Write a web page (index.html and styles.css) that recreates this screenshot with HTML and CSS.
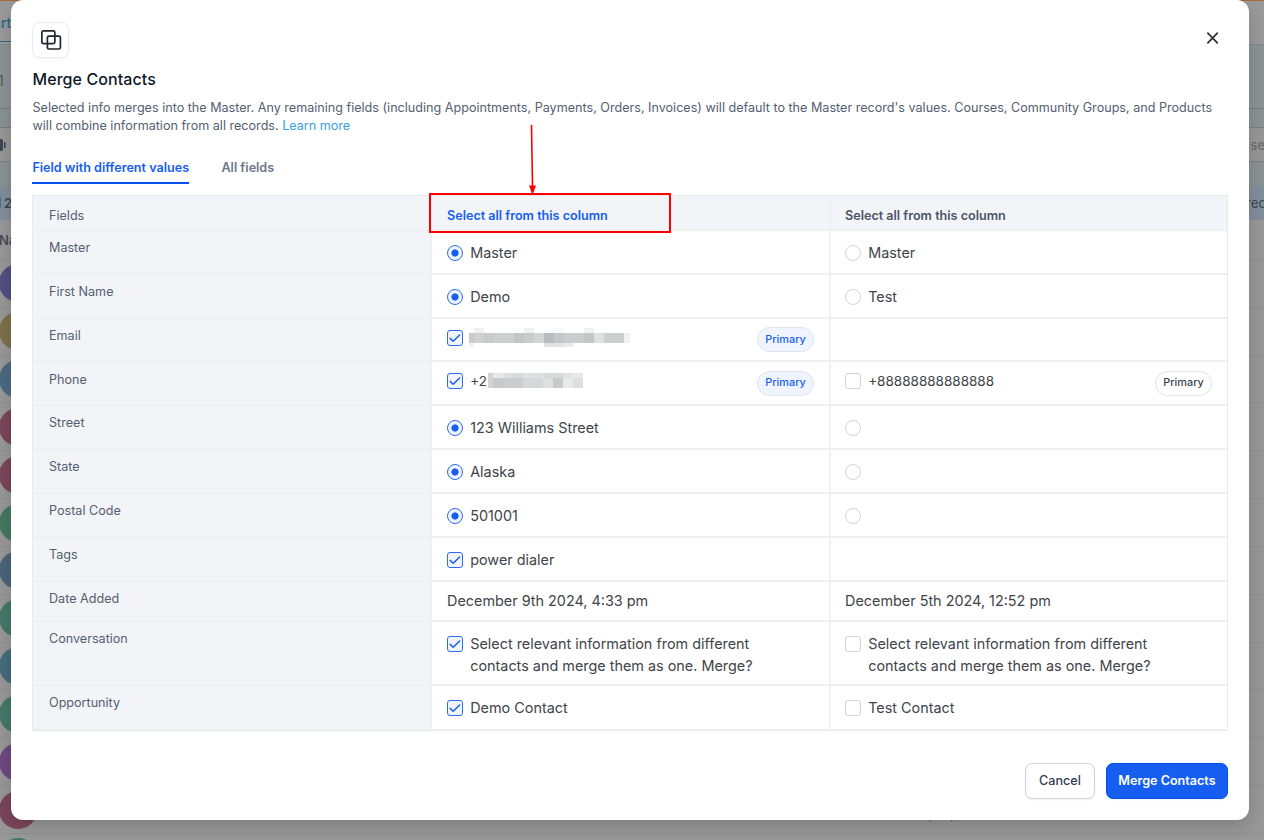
FILE: index.html
```
<!DOCTYPE html>
<html lang="en">
<head>
  <meta charset="UTF-8" />
  <title>Merge Contacts</title>
  <link rel="stylesheet" href="styles.css">
</head>
<body>
  <!-- PAGE BEHIND THE MODAL -->
  <div class="page">
    <div class="page-nav"><span class="nav-tab">art</span></div>
    <div class="page-band"><span class="count">1</span></div>
    <div class="page-gap"></div>
    <div class="page-search">
      <svg width="8" height="14" viewBox="0 0 8 14"><rect x="-8" y="1" width="11" height="12" rx="2" fill="#3b4551"/><rect x="4" y="4" width="1.6" height="6" fill="#3b4551"/></svg>
      <span>se</span>
    </div>
    <div class="page-gap low"></div>
    <div class="page-total"><span><i></i>2</span><span class="rec">rec</span></div>
    <div class="page-head">Na</div>
    <div class="page-row"><b class="avatar indigo"></b></div>
    <div class="page-row"><b class="avatar ochre"></b></div>
    <div class="page-row"><b class="avatar blue"></b></div>
    <div class="page-row"><b class="avatar maroon"></b></div>
    <div class="page-row"><b class="avatar maroon"></b></div>
    <div class="page-row"><b class="avatar green"></b></div>
    <div class="page-row"><b class="avatar slate"></b></div>
    <div class="page-row"><b class="avatar teal"></b></div>
    <div class="page-row"><b class="avatar cyan"></b></div>
    <div class="page-row"><b class="avatar teal"></b></div>
    <div class="page-row"><b class="avatar purple"></b></div>
    <div class="page-row"><b class="avatar maroon"></b><span class="row-link">(     )</span></div>
    <div class="page-row"><b class="avatar teal"></b></div>
  </div>

  <!-- MODAL -->
  <div class="modal">
    <div class="modal-top">
      <div class="modal-icon">
        <svg width="22" height="22" viewBox="0 0 22 22" fill="none" stroke="#20262e" stroke-width="1.7"><rect x="1.85" y="1.85" width="13" height="12.8" rx="1.6"/><rect x="7.4" y="7.2" width="13" height="12.8" rx="1.6"/></svg>
      </div>
      <button class="close" type="button" aria-label="Close">
        <svg width="13" height="12" viewBox="0 0 13 12" fill="none" stroke="#2b2f36" stroke-width="1.7" stroke-linecap="round"><path d="M1.9 1.2 11.3 10.8M11.3 1.2 1.9 10.8"/></svg>
      </button>
    </div>
    <h2>Merge Contacts</h2>
    <p class="intro">Selected info merges into the Master. Any remaining fields (including Appointments, Payments, Orders, Invoices) will default to the Master record's values. Courses, Community Groups, and Products<br>will combine information from all records. <a>Learn more</a></p>

    <div class="tabs">
      <span class="tab active">Field with different values</span>
      <span class="tab">All fields</span>
    </div>

    <div class="grid">
      <div class="label head">Fields</div>
      <div class="cell head picked">Select all from this column</div>
      <div class="cell head">Select all from this column</div>

      <div class="label">Master</div>
      <div class="cell"><i class="radio on"></i><span>Master</span></div>
      <div class="cell"><i class="radio"></i><span>Master</span></div>

      <div class="label">First Name</div>
      <div class="cell"><i class="radio on"></i><span>Demo</span></div>
      <div class="cell"><i class="radio"></i><span>Test</span></div>

      <div class="label">Email</div>
      <div class="cell tight">
        <i class="check on"><svg viewBox="0 0 16 16"><path d="M3.2 8.4 6.2 11.2 12.6 5"/></svg></i>
        <svg class="masked" width="161" height="20" viewBox="0 0 161 20" shape-rendering="crispEdges">
          <path fill="#f1f1f1" d="M5 1h10v5H5zM55 1h10v5H55zM115 1h10v5H115zM0 16h5v4H0z"/>
          <path fill="#fafafa" d="M75 1h20v5H75z"/>
          <path fill="#e2e2e2" d="M75 16h10v4H75zM85 16h10v4H85z"/><path fill="#ececec" d="M95 16h10v4H95z"/>
          <path fill="#c9caca" d="M0 6h5v10H0zM15 6h10v10H15z"/><path fill="#d0d0d0" d="M5 6h10v10H5z"/>
          <path fill="#cecfcf" d="M25 6h10v10H25zM35 6h10v10H35z"/><path fill="#c4c5c7" d="M45 6h10v10H45zM115 6h10v10H115z"/>
          <path fill="#cbcccd" d="M55 6h10v10H55zM95 6h20v10H95z"/><path fill="#d4d5d6" d="M65 6h10v10H65z"/>
          <path fill="#bbbcbe" d="M75 6h10v10H75z"/><path fill="#c5c6c8" d="M85 6h10v10H85z"/>
          <path fill="#dfe0e0" d="M125 6h10v10H125z"/><path fill="#cdcfce" d="M135 6h20v10H135z"/><path fill="#f0f1f1" d="M155 6h6v10H155z"/>
        </svg>
        <em class="badge on">Primary</em>
      </div>
      <div class="cell"></div>

      <div class="label phone">Phone</div>
      <div class="cell tight phone">
        <i class="check on"><svg viewBox="0 0 16 16"><path d="M3.2 8.4 6.2 11.2 12.6 5"/></svg></i><span class="number">+2</span>
        <svg class="masked digits" width="95" height="15" viewBox="0 0 95 15" shape-rendering="crispEdges">
          <path fill="#d3d3d4" d="M0 0h5v15H0z"/><path fill="#e8e8e8" d="M5 0h10v5H5zM85 0h10v5H85z"/>
          <path fill="#dfe0e0" d="M15 0h10v5H15zM35 0h20v5H35z"/><path fill="#d8d9d9" d="M25 0h10v5H25zM55 0h20v5H55z"/><path fill="#e1e2e2" d="M75 0h10v5H75z"/>
          <path fill="#c7c8c9" d="M5 5h10v10H5z"/><path fill="#cbcccd" d="M15 5h20v10H15z"/><path fill="#d6d7d8" d="M35 5h20v10H35z"/>
          <path fill="#e0e0e1" d="M55 5h10v10H55z"/><path fill="#c9caca" d="M65 5h10v10H65z"/><path fill="#e8e9e9" d="M75 5h10v10H75z"/><path fill="#dddede" d="M85 5h10v10H85z"/>
        </svg>
        <em class="badge on">Primary</em>
      </div>
      <div class="cell tight phone"><i class="check"></i><span class="number">+88888888888888</span><em class="badge">Primary</em></div>

      <div class="label">Street</div>
      <div class="cell"><i class="radio on"></i><span>123 Williams Street</span></div>
      <div class="cell"><i class="radio"></i></div>

      <div class="label">State</div>
      <div class="cell"><i class="radio on"></i><span>Alaska</span></div>
      <div class="cell"><i class="radio"></i></div>

      <div class="label">Postal Code</div>
      <div class="cell"><i class="radio on"></i><span>501001</span></div>
      <div class="cell"><i class="radio"></i></div>

      <div class="label">Tags</div>
      <div class="cell"><i class="check on"><svg viewBox="0 0 16 16"><path d="M3.2 8.4 6.2 11.2 12.6 5"/></svg></i><span>power dialer</span></div>
      <div class="cell"></div>

      <div class="label">Date Added</div>
      <div class="cell tight">December 9th 2024, 4:33 pm</div>
      <div class="cell tight">December 5th 2024, 12:52 pm</div>

      <div class="label">Conversation</div>
      <div class="cell"><i class="check on"><svg viewBox="0 0 16 16"><path d="M3.2 8.4 6.2 11.2 12.6 5"/></svg></i><span>Select relevant information from different<br>contacts and merge them as one. Merge?</span></div>
      <div class="cell"><i class="check"></i><span>Select relevant information from different<br>contacts and merge them as one. Merge?</span></div>

      <div class="label">Opportunity</div>
      <div class="cell"><i class="check on"><svg viewBox="0 0 16 16"><path d="M3.2 8.4 6.2 11.2 12.6 5"/></svg></i><span>Demo Contact</span></div>
      <div class="cell"><i class="check"></i><span>Test Contact</span></div>
    </div>

    <div class="actions">
      <button class="btn" type="button">Cancel</button>
      <button class="btn primary" type="button">Merge Contacts</button>
    </div>
  </div>

  <!-- CALLOUT -->
  <svg class="arrow" width="12" height="70" viewBox="0 0 12 70"><path d="M5.5 0 6.5 61" stroke="#f00" stroke-width="1.6"/><path d="M3 60.5h7L6.5 70z" fill="#f00"/></svg>
  <div class="callout"></div>
</body>
</html>
```
FILE: styles.css
```
*{box-sizing:border-box}
body{margin:0;height:840px;overflow:hidden;position:relative;font-family:Inter,"Liberation Sans",sans-serif;background:#979797}
h2,p{margin:0}
i,em{font-style:normal}
button{font-family:inherit;cursor:pointer}

/* page behind */
.page{height:840px;overflow:hidden;color:#3b4551;font-size:14px}
.page-nav{height:45px;background:#999;border-bottom:1px solid #838789;border-top:1px solid #a06b40}
.nav-tab{display:block;width:33px;height:41px;line-height:43px;border-bottom:1px solid #2b6481;color:#2b6481;font-weight:500;font-size:14px;text-indent:-7px}
.page-band{height:64px;background:#8b9295;border-bottom:1px solid #777d82;line-height:71px}
.count{color:#4c5c50;margin-left:-2px}
.page-gap{height:18px;background:#899195}
.page-gap.low{height:24px}
.page-search{height:35px;display:flex;justify-content:space-between;align-items:center;background:#979696;border-top:1px solid #777d82;border-bottom:1px solid #777d82;color:#666;font-size:13px}
.page-search span{margin-right:-1px}
.page-total{height:34px;display:flex;justify-content:space-between;background:#818e9a;line-height:34px;font-weight:600;font-size:13px}
.page-total i{display:inline-block;width:1px;height:11px;background:#3b7892;margin-right:3px}
.page-total .rec{font-weight:400;margin-right:-2px}
.page-head{height:40px;line-height:41px;border-bottom:1px solid #8b8f8f;font-size:13px;text-indent:-1px;font-weight:500}
.page-row{height:47.83px;display:flex;align-items:center;border-bottom:1px solid #8b8f8f}
.avatar{width:38px;height:38px;border-radius:50%;margin-left:-1px}
.indigo{background:#514f80}
.ochre{background:#7c7049}
.blue{background:#4a6982}
.maroon{background:#7a4659}
.green{background:#45785f}
.slate{background:#4a647a}
.teal{background:#457869}
.cyan{background:#466b7a}
.purple{background:#6d487e}
.row-link{margin:10px 0 0 890px;color:#4c5c8e;font-size:13px;white-space:pre}

/* modal */
.modal{position:absolute;left:11px;top:0;width:1238px;height:820px;padding:22px 21px 21px;background:#fff;border-radius:12px;box-shadow:0 6px 16px rgba(0,0,0,.16)}
.modal-top{display:flex;justify-content:space-between;height:36px}
.modal-icon{width:37px;height:36px;display:flex;align-items:center;justify-content:center;border:1px solid #eaebf0;border-radius:8px;box-shadow:0 1px 2px rgba(16,24,40,.05)}
.close{width:13px;height:12px;margin:10px 9px 0 0;padding:0;border:0;background:none}
.close svg{display:block}
.modal h2{margin-top:9px;padding-left:.5px;font-size:16px;line-height:24px;letter-spacing:.08px;font-weight:500;color:#101828}
.intro{margin-top:8px;padding-left:.5px;font-size:12.6px;line-height:18px;color:#556070;white-space:nowrap}
.intro a{color:#37a0dc}
.tabs{display:flex;gap:32px;margin-top:24px;height:25px}
.tab{padding-left:.4px;font-size:12.6px;line-height:18px;font-weight:600;color:#6d768a}
.tab.active{color:#155eef;border-bottom:2px solid #004eeb}

.grid{display:grid;grid-template-columns:399px 399px 396px;grid-template-rows:35px 44px 44px 43px 44px 44px 44px 44px 44px 40px 64px 44px;margin-top:11px;border:1px solid #e8e9ed}
.label{padding:8px 16px 0;background:#f2f4f8;border-right:2px solid #eff0f2;border-bottom:2px solid #eff0f2;color:#556070;font-size:12.6px;line-height:18px}
.label.phone{padding-top:9px}
.cell{display:flex;align-items:flex-start;padding:11px 14px 0 15px;border-right:2px solid #f0f0f0;border-bottom:2px solid #f0f0f0;color:#414449;font-size:14.4px;line-height:22px}
.cell:nth-child(3n){padding-left:14px;border-right:0;padding-right:15px}
.cell.tight{padding-top:8px}
.label.head,.cell.head{padding-top:11px;background:#f2f4f8;border-color:#eff0f2}
.cell.head{font-size:12.6px;line-height:18px;font-weight:600;color:#4b5565}
.cell.head.picked{color:#155eef}
.grid>:nth-last-child(-n+3){border-bottom-width:1px}
.radio,.check{flex:none;width:16px;height:16px;margin:3px 7.2px 0 0;border:1px solid #d0d5dd;background:#fff}
.radio{border-radius:50%}
.check{border-radius:3px}
.radio.on{border-color:#2b6cf0;background:radial-gradient(circle at 50% 50%,#155eef 3.2px,#eff4ff 4px)}
.check.on{border-color:#2b6cf0;background:#f2f5fd}
.check svg{display:block;width:16px;height:16px;margin:-1px;fill:none;stroke:#155eef;stroke-width:1.5;stroke-linecap:round;stroke-linejoin:round}
.number{font-size:13.5px}
.masked{margin-left:-1.2px}
.masked.digits{margin:3px 0 0 1px}
.badge{margin-left:auto;width:57px;height:25px;border:1px solid #e0e3ea;border-radius:13px;font-size:10.9px;line-height:22px;font-weight:500;text-align:center;color:#363f52}
.phone .badge{margin-top:1px;line-height:21px}
.badge.on{background:#eff4ff;color:#155eef}
.cell:nth-child(3n-1) .badge{margin-right:1px}

.actions{display:flex;justify-content:flex-end;gap:11px;margin-top:32px}
.btn{width:70px;height:36px;padding:0 0 1px;border:1px solid #d0d3de;border-radius:7px;background:#fff;color:#344054;font-size:12.6px;font-weight:500;box-shadow:0 1px 2px rgba(16,24,40,.05)}
.btn.primary{width:122px;border-color:#004eeb;background:#155eef;color:#fff;font-weight:600}

/* callout */
.arrow{position:absolute;left:526px;top:125px}
.callout{position:absolute;left:429px;top:193px;width:242px;height:40px;border:2px solid #f00}
```
